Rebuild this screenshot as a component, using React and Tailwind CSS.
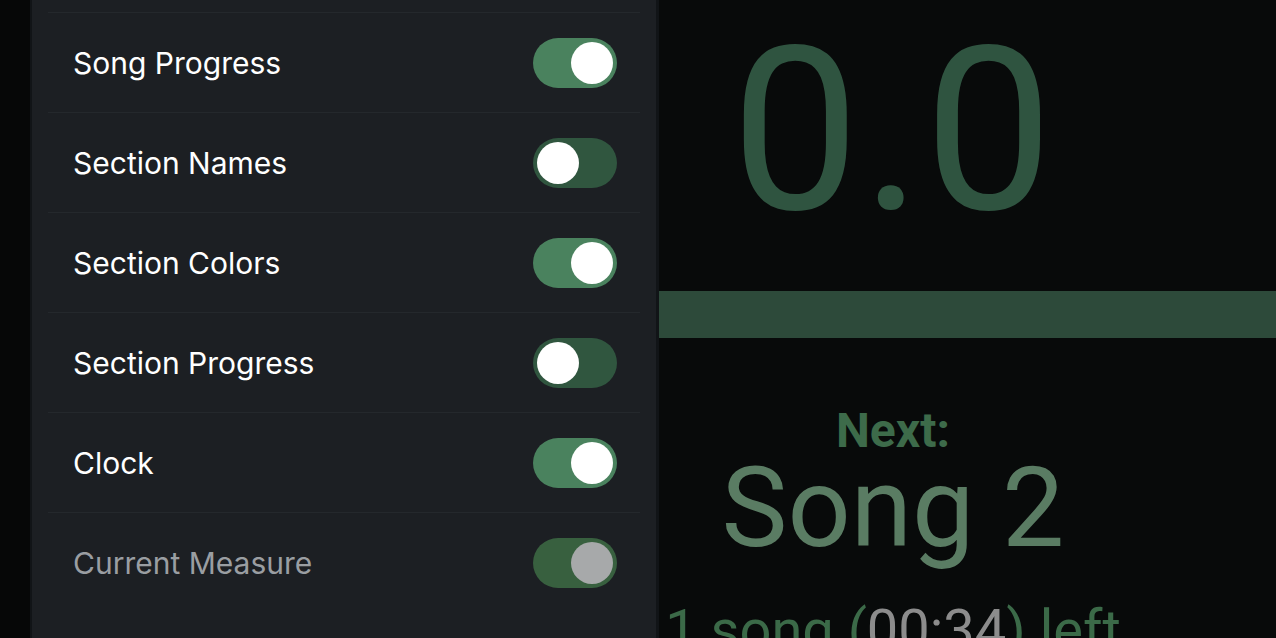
import React, { useState } from "react";

const settings = [
  { label: "Song Progress", on: true },
  { label: "Section Names", on: false },
  { label: "Section Colors", on: true },
  { label: "Section Progress", on: false },
  { label: "Clock", on: true },
  { label: "Current Measure", on: true, disabled: true },
];

function Toggle({ on, disabled, onClick }) {
  let track = on ? "bg-[#4a825e]" : "bg-[#30563f]";
  if (disabled) track = "bg-[#38603f]";
  return (
    <button
      type="button"
      onClick={onClick}
      disabled={disabled}
      className={`flex h-[50px] w-[84px] items-center rounded-full px-[4px] ${track} ${
        on ? "justify-end" : "justify-start"
      }`}
    >
      <span
        className={`h-[42px] w-[42px] rounded-full ${
          disabled ? "bg-[#a7a9aa]" : "bg-white"
        }`}
      />
    </button>
  );
}

export default function App() {
  const [items, setItems] = useState(settings);

  const flip = (i) =>
    setItems(items.map((it, j) => (j === i ? { ...it, on: !it.on } : it)));

  return (
    <div className="flex h-[638px] w-[1276px] overflow-hidden bg-[#080a0a]">
      <div className="w-[30px] shrink-0 bg-[#060707]" />

      {/* settings panel */}
      <div className="w-[629px] shrink-0 border-l-2 border-r-[3px] border-[#111417] bg-[#1c1f23] pt-[12px] font-['Inter',sans-serif]">
        <div className="mx-[16px]">
          {items.map((it, i) => (
            <div
              key={it.label}
              className="flex h-[100px] items-center justify-between border-t border-[#24282c] pl-[25px] pr-[23px]"
            >
              <span
                className={`pt-[2px] text-[30px] ${
                  it.disabled ? "text-[#9a9ea2]" : "text-white"
                }`}
              >
                {it.label}
              </span>
              <Toggle on={it.on} disabled={it.disabled} onClick={() => flip(i)} />
            </div>
          ))}
        </div>
      </div>

      {/* display */}
      <div className="flex-1 font-['Roboto',sans-serif]">
        <div className="w-[468px] text-center">
          <div className="h-[291px] pt-[1px] text-[229px] leading-[260px] tracking-[2px] text-[#2f5440]">
            0.0
          </div>
        </div>
        <div className="h-[47px] bg-[#2d4a3a]" />
        <div className="w-[468px] pt-[65px] text-center">
          <div className="text-[48px] font-bold leading-[56px] text-[#3d6b4a]">
            Next:
          </div>
          <div className="mt-[-11px] text-[111px] leading-[120px] text-[#5a7c63]">
            Song 2
          </div>
          <div className="mt-[30px] whitespace-nowrap text-[56px] leading-[64px] text-[#3b6a48]">
            1 song (<span className="text-[#8c8c8c]">00:34</span>) left
          </div>
        </div>
      </div>
    </div>
  );
}
